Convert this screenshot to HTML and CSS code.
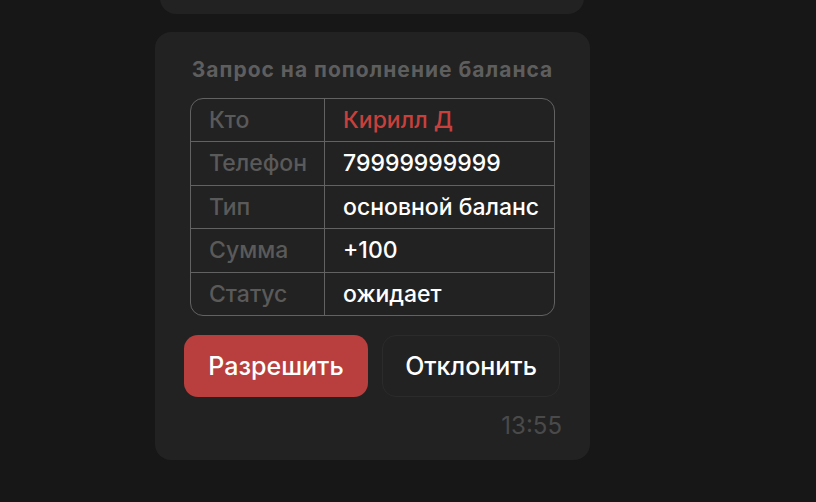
FILE: index.html
```html
<!DOCTYPE html>
<html lang="ru">
<head>
<meta charset="utf-8">
<link rel="stylesheet" href="styles.css">
</head>
<body>
<div class="page">
  <div class="card card-prev"></div>
  <div class="card card-main">
    <div class="title">Запрос на пополнение баланса</div>
    <div class="table">
      <div class="row">
        <div class="cell label">Кто</div>
        <div class="cell value accent">Кирилл Д</div>
      </div>
      <div class="row">
        <div class="cell label">Телефон</div>
        <div class="cell value">79999999999</div>
      </div>
      <div class="row">
        <div class="cell label">Тип</div>
        <div class="cell value">основной баланс</div>
      </div>
      <div class="row">
        <div class="cell label">Сумма</div>
        <div class="cell value">+100</div>
      </div>
      <div class="row">
        <div class="cell label">Статус</div>
        <div class="cell value">ожидает</div>
      </div>
    </div>
    <div class="actions">
      <button class="btn btn-primary">Разрешить</button>
      <button class="btn btn-secondary">Отклонить</button>
    </div>
    <div class="time">13:55</div>
  </div>
</div>
</body>
</html>
```
FILE: styles.css
```css
* { box-sizing: border-box; }
html, body {
  margin: 0;
  padding: 0;
  background: #171717;
  height: 100%;
  overflow: hidden;
}
body {
  font-family: "Inter", "Noto Sans", sans-serif;
  color: #ffffff;
}
.page {
  display: flex;
  flex-direction: column;
}
.card {
  background: #222222;
  border-radius: 16px;
}
.card-prev {
  margin-top: -46px;
  margin-left: 160px;
  width: 424px;
  height: 60px;
}
.card-main {
  margin-top: 18px;
  margin-left: 155px;
  width: 435px;
  height: 428px;
  padding: 24px 29px 0 29px;
  display: flex;
  flex-direction: column;
}
.title {
  text-align: center;
  font-size: 21px;
  font-weight: 700;
  letter-spacing: 1px;
  color: #5e5e5e;
  line-height: 28px;
  height: 42px;
  white-space: nowrap;
}
.table {
  margin: 0 6px;
  border: 1.5px solid #626262;
  border-radius: 13px;
  overflow: hidden;
  display: flex;
  flex-direction: column;
}
.row {
  display: grid;
  grid-template-columns: 134px 1fr;
  height: 43.5px;
  border-top: 1.5px solid #626262;
}
.row:first-child { border-top: none; height: 42px; }
.cell {
  display: flex;
  align-items: center;
  font-size: 23px;
  font-weight: 500;
  padding-left: 18px;
  white-space: nowrap;
}
.label {
  color: #5a5a5a;
  border-right: 1.5px solid #626262;
}
.value { color: #ffffff; padding-left: 18px; }
.accent { color: #c8403c; }
.actions {
  display: flex;
  gap: 14px;
  margin-top: 19px;
}
.btn {
  height: 62px;
  border-radius: 14px;
  font-family: inherit;
  font-size: 25px;
  font-weight: 500;
  color: #ffffff;
  cursor: pointer;
  padding: 0;
}
.btn-primary {
  width: 184px;
  background: #b83f3d;
  border: none;
}
.btn-secondary {
  width: 178px;
  background: #222222;
  border: 1.5px solid #2b2b2b;
}
.time {
  margin-top: 15px;
  text-align: right;
  font-size: 24px;
  color: #4a4a4a;
  line-height: 28px;
  margin-right: -1px;
}
```
